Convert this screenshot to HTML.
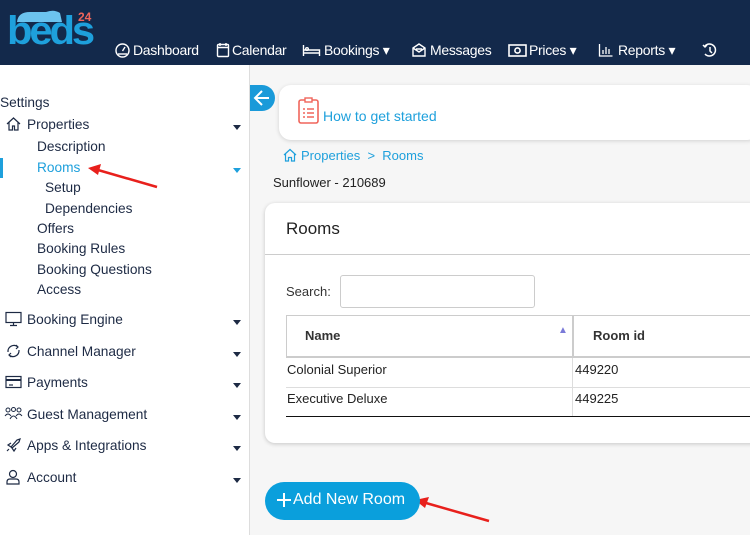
<!DOCTYPE html>
<html><head><meta charset="utf-8"><style>
*{margin:0;padding:0;box-sizing:border-box}
body{width:750px;height:535px;overflow:hidden;background:#f6f6f6;font-family:"Liberation Sans",sans-serif;position:relative;color:#1d2a44}
.hdr{position:absolute;left:0;top:0;width:750px;height:65px;background:#13294b}
.nav{position:absolute;top:42px;color:#fff;font-size:14px;white-space:nowrap;letter-spacing:-0.3px}
.ni{position:absolute;top:42px}
.side{position:absolute;left:0;top:65px;width:250px;height:470px;background:#fff;border-right:1px solid #ddd}
.s{position:absolute;font-size:13.7px;color:#1d2a44;white-space:nowrap}
.car{position:absolute;left:233px;width:0;height:0;border-left:4.5px solid transparent;border-right:4.5px solid transparent;border-top:5px solid #1d2a44}
.a{position:absolute;font-size:14px;white-space:nowrap}
</style></head><body>
<div class="hdr"></div>
<svg style="position:absolute;left:0;top:0" width="100" height="50">
<path d="M17 22 Q18 12 30 12 L46 12 Q54 9 60 13 L62 22 Z" fill="#6cc3ee"/>
<text x="7" y="44" font-family="Liberation Sans" font-weight="bold" font-size="40" fill="#1ea0dc" letter-spacing="-3" textLength="85" lengthAdjust="spacingAndGlyphs">beds</text>
<text x="78" y="21" font-family="Liberation Sans" font-weight="bold" font-size="12" fill="#f0655b">24</text>
</svg>
<svg class="ni" style="left:114px" width="17" height="16" fill="none" stroke="#fff" stroke-width="1.4"><circle cx="8.5" cy="8.5" r="6.5"/><path d="M8.5 9 L11 5"/><path d="M4 12h9"/></svg>
<div class="nav" style="left:133px">Dashboard</div>
<svg class="ni" style="left:216px" width="14" height="16" fill="none" stroke="#fff" stroke-width="1.4"><rect x="1.5" y="2.5" width="11" height="12" rx="1"/><path d="M4 1v3M10 1v3M1.5 5.5h11"/></svg>
<div class="nav" style="left:232px">Calendar</div>
<svg class="ni" style="left:302px" width="19" height="16" fill="none" stroke="#fff" stroke-width="1.4"><path d="M1.5 3v11M1.5 11h16v3M1.5 8h16v3"/><circle cx="5" cy="7" r="1.3"/></svg>
<div class="nav" style="left:324px">Bookings ▾</div>
<svg class="ni" style="left:411px" width="16" height="16" fill="none" stroke="#fff" stroke-width="1.4"><path d="M2 6 L8 2 L14 6 V14 H2 Z"/><path d="M2 6 L8 10 L14 6M5 7h6"/></svg>
<div class="nav" style="left:430px">Messages</div>
<svg class="ni" style="left:508px" width="19" height="16" fill="none" stroke="#fff" stroke-width="1.6"><rect x="1" y="3" width="17" height="11"/><circle cx="9.5" cy="8.5" r="2.6"/></svg>
<div class="nav" style="left:529px">Prices ▾</div>
<svg class="ni" style="left:598px" width="16" height="16" fill="none" stroke="#fff" stroke-width="1.3"><path d="M1.5 2v12h13M5 12V8M8 12V5M11 12V7"/></svg>
<div class="nav" style="left:618px">Reports ▾</div>
<svg class="ni" style="left:702px" width="16" height="16" fill="none" stroke="#fff" stroke-width="1.5"><path d="M3 4 A6 6 0 1 1 3 12"/><path d="M1 3 L3 5 L5 3M8 5v4l2 2"/></svg>

<div class="side"></div>
<div class="s" style="left:0;top:95px">Settings</div>
<svg style="position:absolute;left:6px;top:116px" width="15" height="15" fill="none" stroke="#1d2a44" stroke-width="1.2"><path d="M1 8 L7.5 2 L14 8M3 6.5V14h3.5v-4h2v4H12V6.5"/></svg>
<div class="s" style="left:27px;top:117px">Properties</div><div class="car" style="top:125px"></div>
<div class="s" style="left:37px;top:139px">Description</div>
<div style="position:absolute;left:0;top:158px;width:3px;height:20px;background:#1ea0dc"></div>
<div class="s" style="left:37px;top:160px;color:#1ea0dc">Rooms</div><div class="car" style="top:168px;border-top-color:#1ea0dc"></div>
<div class="s" style="left:45px;top:180px">Setup</div>
<div class="s" style="left:45px;top:201px">Dependencies</div>
<div class="s" style="left:37px;top:221px">Offers</div>
<div class="s" style="left:37px;top:241px">Booking Rules</div>
<div class="s" style="left:37px;top:262px">Booking Questions</div>
<div class="s" style="left:37px;top:282px">Access</div>
<svg style="position:absolute;left:5px;top:311px" width="17" height="16" fill="none" stroke="#1d2a44" stroke-width="1.2"><rect x="1" y="1.5" width="15" height="10"/><path d="M8.5 11.5v3M5 14.5h7"/></svg>
<div class="s" style="left:27px;top:312px">Booking Engine</div><div class="car" style="top:320px"></div>
<svg style="position:absolute;left:5px;top:343px" width="17" height="16" fill="none" stroke="#1d2a44" stroke-width="1.2"><path d="M3 9 A6 6 0 0 1 13 4M14 7 A6 6 0 0 1 4 12M11 2l2 2-2 2M6 10l-2 2 2 2"/></svg>
<div class="s" style="left:27px;top:344px">Channel Manager</div><div class="car" style="top:352px"></div>
<svg style="position:absolute;left:5px;top:375px" width="17" height="15" fill="none" stroke="#1d2a44" stroke-width="1.2"><rect x="1" y="1.5" width="15" height="11"/><path d="M1 5h15" stroke-width="2"/><path d="M4 10h4"/></svg>
<div class="s" style="left:27px;top:375px">Payments</div><div class="car" style="top:383px"></div>
<svg style="position:absolute;left:4px;top:406px" width="19" height="15" fill="none" stroke="#1d2a44" stroke-width="1"><circle cx="4" cy="4" r="2"/><circle cx="9.5" cy="3.5" r="2"/><circle cx="15" cy="4" r="2"/><path d="M1 10q3-4 6 0M12 10q3-4 6 0M6 13q3.5-6 7 0"/></svg>
<div class="s" style="left:27px;top:407px">Guest Management</div><div class="car" style="top:415px"></div>
<svg style="position:absolute;left:5px;top:437px" width="17" height="16" fill="none" stroke="#1d2a44" stroke-width="1.2"><path d="M6 10 L12 3 L15 2 L14 5 L7 11 Z M6 10 L3 8 L6 6 M7 11 L9 14 L11 11 M4 12 L2 14"/></svg>
<div class="s" style="left:27px;top:438px">Apps &amp; Integrations</div><div class="car" style="top:446px"></div>
<svg style="position:absolute;left:5px;top:469px" width="16" height="16" fill="none" stroke="#1d2a44" stroke-width="1.2"><circle cx="8" cy="5" r="3.5"/><path d="M2 15v-2q0-3 3-3h6q3 0 3 3v2z"/></svg>
<div class="s" style="left:27px;top:470px">Account</div><div class="car" style="top:478px"></div>
<svg style="position:absolute;left:0;top:0" width="750" height="535">
<line x1="157" y1="187" x2="98" y2="170" stroke="#e8201c" stroke-width="2.5"/><path d="M88 168 L101 164 L98 175 Z" fill="#e8201c"/>
<line x1="489" y1="521" x2="426" y2="503" stroke="#e8201c" stroke-width="2.5"/><path d="M415 500 L429 497 L425 508 Z" fill="#e8201c"/>
</svg>

<div style="position:absolute;left:250px;top:85px;width:25px;height:26px;background:#1a9ad9;border-radius:0 13px 13px 0"></div>
<svg style="position:absolute;left:252px;top:88px" width="20" height="20" fill="none" stroke="#fff" stroke-width="2"><path d="M17 10H4M10 3L3 10l7 7"/></svg>
<div style="position:absolute;left:279px;top:85px;width:480px;height:55px;background:#fff;border-radius:12px;box-shadow:0 1px 4px rgba(0,0,0,.15)"></div>
<svg style="position:absolute;left:298px;top:97px" width="22" height="28"><rect x="1" y="3" width="19" height="23" rx="2" fill="none" stroke="#f0655b" stroke-width="1.6"/><rect x="7" y="1" width="7" height="4" fill="#fff" stroke="#f0655b" stroke-width="1.4"/><path d="M5 12h2M9 12h7M5 16h2M9 16h7M5 20h2M9 20h7" stroke="#f0655b" stroke-width="1.6"/></svg>
<div class="a" style="left:323px;top:108px;color:#1ea0dc">How to get started</div>
<svg style="position:absolute;left:283px;top:148px" width="14" height="14" fill="none" stroke="#1ea0dc" stroke-width="1.2"><path d="M1 7 L7 1.5 L13 7M2.5 5.5V13h3v-3.5h3V13h3V5.5"/></svg>
<div class="a" style="left:301px;top:148px;font-size:13px;color:#1ea0dc">Properties &nbsp;&gt;&nbsp; Rooms</div>
<div class="a" style="left:273px;top:175px;font-size:13px;color:#222">Sunflower - 210689</div>

<div style="position:absolute;left:265px;top:203px;width:500px;height:240px;background:#fff;border-radius:10px;box-shadow:0 1px 4px rgba(0,0,0,.2)"></div>
<div class="a" style="left:286px;top:219px;font-size:17px;color:#222">Rooms</div>
<div style="position:absolute;left:265px;top:254px;width:485px;height:1px;background:#ccc"></div>
<div class="a" style="left:286px;top:284px;font-size:13px;color:#333">Search:</div>
<div style="position:absolute;left:340px;top:275px;width:195px;height:33px;border:1px solid #ccc;border-radius:3px"></div>
<div style="position:absolute;left:286px;top:315px;width:470px;height:43px;border:1px solid #ccc;border-width:1px 0 2px 1px"></div>
<div style="position:absolute;left:572px;top:315px;width:2px;height:43px;background:#ccc"></div>
<div class="a" style="left:305px;top:328px;font-size:13px;font-weight:bold;color:#333">Name</div>
<div class="a" style="left:558px;top:325px;font-size:10px;color:#7a7ad8">▲</div>
<div class="a" style="left:593px;top:328px;font-size:13px;font-weight:bold;color:#333">Room id</div>
<div class="a" style="left:287px;top:362px;font-size:13px;color:#222">Colonial Superior</div>
<div class="a" style="left:575px;top:362px;font-size:13px;color:#222">449220</div>
<div style="position:absolute;left:286px;top:387px;width:470px;height:1px;background:#ddd"></div>
<div class="a" style="left:287px;top:391px;font-size:13px;color:#222">Executive Deluxe</div>
<div class="a" style="left:575px;top:391px;font-size:13px;color:#222">449225</div>
<div style="position:absolute;left:572px;top:358px;width:1px;height:58px;background:#ddd"></div>
<div style="position:absolute;left:286px;top:416px;width:470px;height:1px;background:#111"></div>

<div style="position:absolute;left:265px;top:482px;width:155px;height:38px;background:#0a9fdc;border-radius:19px"></div>
<svg style="position:absolute;left:277px;top:493px" width="14" height="14" stroke="#fff" stroke-width="2"><path d="M7 0v14M0 7h14"/></svg>
<div class="a" style="left:293px;top:491px;font-size:16px;color:#fff">Add New Room</div>
</body></html>
